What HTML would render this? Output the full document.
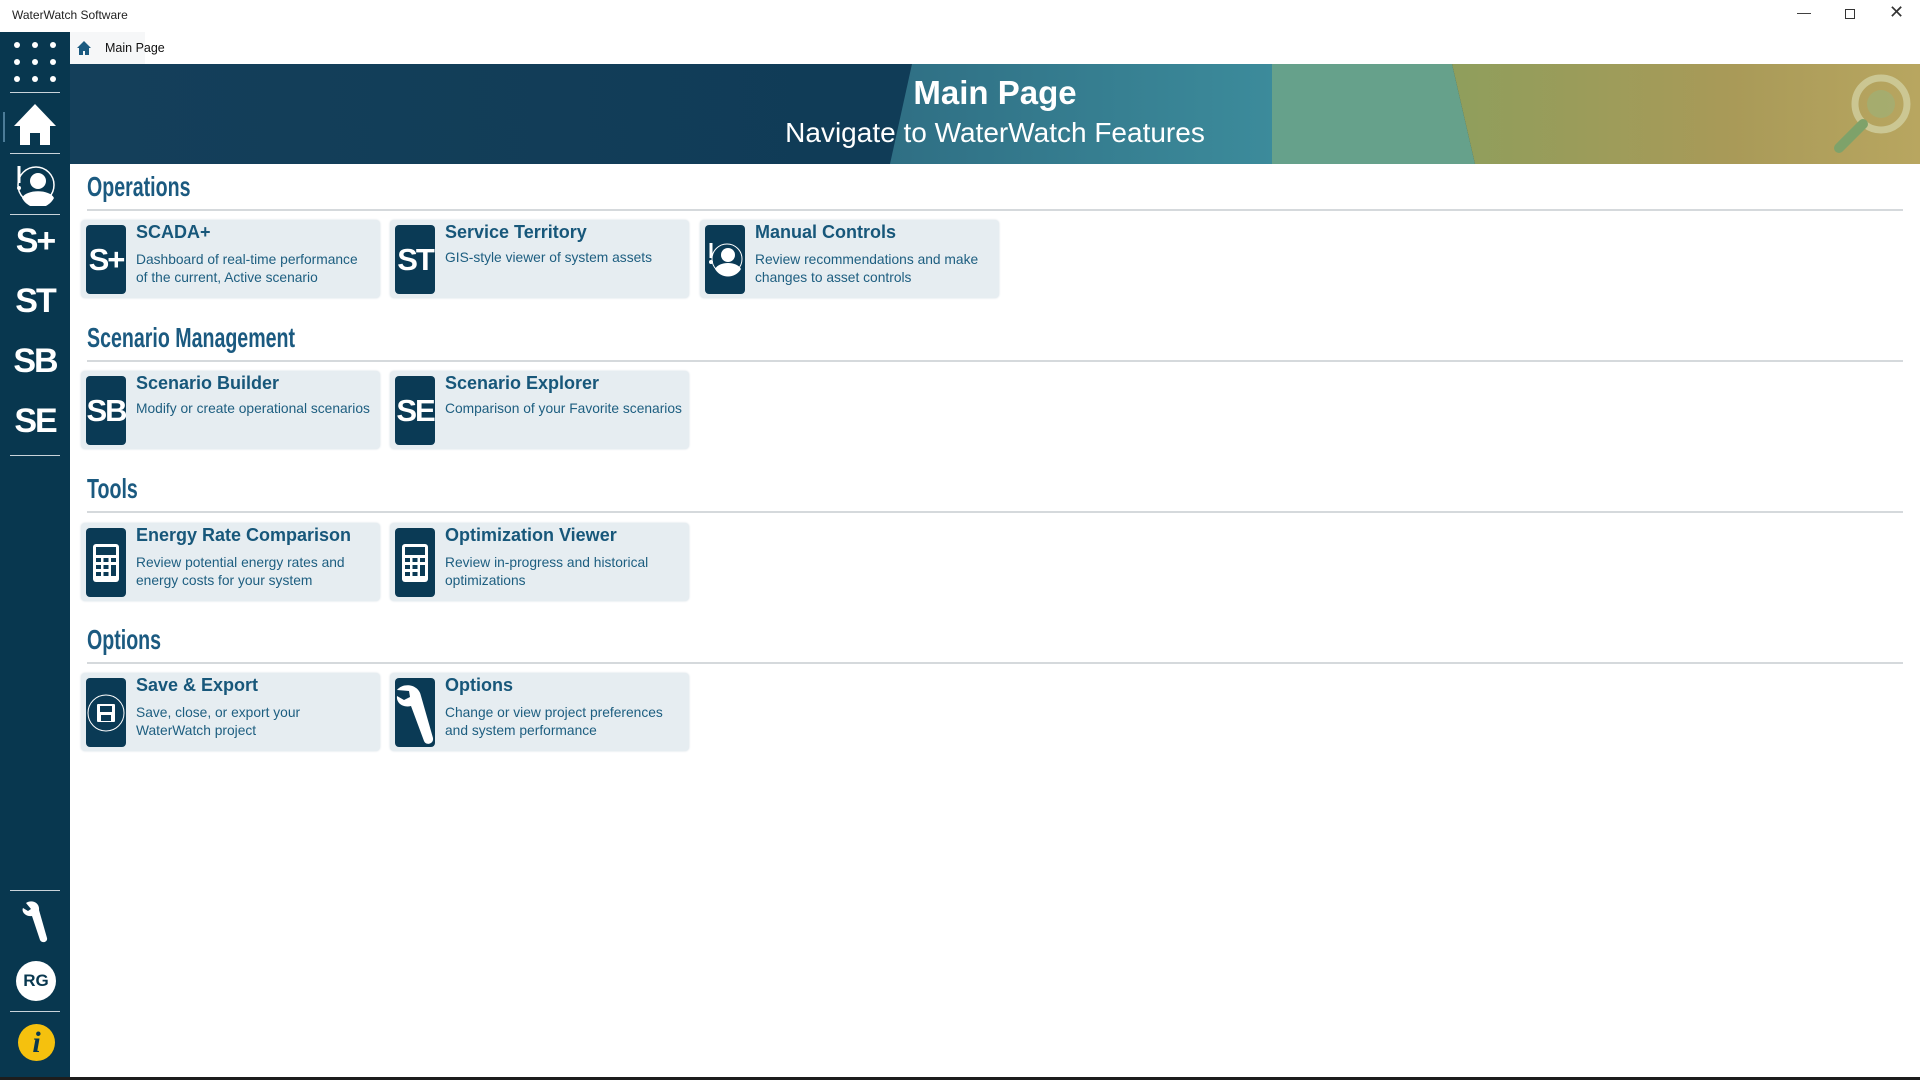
<!DOCTYPE html>
<html><head><meta charset="utf-8"><style>
*{margin:0;padding:0;box-sizing:border-box}
body{width:1920px;height:1080px;position:relative;background:#fff;font-family:"Liberation Sans",sans-serif;overflow:hidden}
.abs{position:absolute}
#side{left:0;top:32px;width:70px;height:1045px;background:#08374f}
.hr{position:absolute;left:10px;width:50px;height:1px;background:#c9d3da}
.sl{position:absolute;left:0;width:70px;text-align:center;color:#fff;font-weight:bold;font-size:34px;letter-spacing:-2px}
.card{position:absolute;width:299px;height:78px;background:#e6edf1;border-radius:4px;box-shadow:0 0 2px #d4dde3}
.ic{position:absolute;left:5px;top:5px;width:40px;height:69px;background:#0a3a55;border-radius:4px;color:#fff;font-weight:bold;font-size:31px;display:flex;align-items:center;justify-content:center;letter-spacing:-2px;overflow:hidden}
.t{position:absolute;left:55px;top:2px;font-weight:bold;font-size:18px;color:#17577a;white-space:nowrap}
.d{position:absolute;left:55px;top:31px;font-size:13.8px;line-height:18px;color:#1d5e80;white-space:nowrap}
.h{position:absolute;left:87px;font-family:"Liberation Sans Narrow","Liberation Sans",sans-serif;font-weight:bold;font-size:28px;color:#1b5a80;transform:scaleX(.7);transform-origin:left}
.ln{position:absolute;left:87px;width:1816px;height:2px;background:#d5d9dc}
</style></head><body>
<div class="abs" style="left:12px;top:8px;font-size:12px;color:#222">WaterWatch Software</div>
<div class="abs" style="left:1797px;top:4px;font-size:14px;color:#333">&#8212;</div>
<div class="abs" style="left:1845px;top:9px;width:10px;height:10px;border:1px solid #333"></div>
<div class="abs" style="left:1889px;top:2px;font-size:18px;color:#333">&#10005;</div>
<div class="abs" style="left:70px;top:32px;width:75px;height:32px;background:#f6f7f8"></div>
<svg class="abs" style="left:76px;top:40px" width="16" height="16" viewBox="0 0 16 16"><path d="M8 1L1 8h2v7h4v-4h2v4h4V8h2z" fill="#1b5a80"/></svg>
<div class="abs" style="left:105px;top:41px;font-size:12.5px;color:#111">Main Page</div>

<svg class="abs" style="left:70px;top:64px" width="1850" height="100" viewBox="0 0 1850 100">
<defs>
<linearGradient id="dk" x1="0" x2="1"><stop offset="0" stop-color="#143f5a"/><stop offset="1" stop-color="#0b3853"/></linearGradient>
<linearGradient id="tl" x1="0" x2="1"><stop offset="0" stop-color="#2f6f84"/><stop offset="1" stop-color="#3c8b9b"/></linearGradient>
<linearGradient id="ol" x1="0" x2="1"><stop offset="0" stop-color="#8f9e5c"/><stop offset=".6" stop-color="#a99a58"/><stop offset="1" stop-color="#b8a660"/></linearGradient>
</defs>
<rect width="1850" height="100" fill="url(#dk)"/>
<polygon points="842,0 1202,0 1202,100 820,100" fill="url(#tl)"/>
<polygon points="1202,0 1382,0 1405,100 1202,100" fill="#66a18b"/>
<polygon points="1382,0 1850,0 1850,100 1405,100" fill="url(#ol)"/>
</svg>
<svg class="abs" style="left:1825px;top:72px" width="90" height="84" viewBox="0 0 90 84"><circle cx="56" cy="32" r="26" fill="none" stroke="#d1cfa0" stroke-width="7" opacity=".8"/><circle cx="56" cy="32" r="14" fill="#9bb27a" opacity=".6"/><path d="M38 52L14 76" stroke="#7ea26a" stroke-width="10" stroke-linecap="round"/></svg>
<div class="abs" style="left:70px;width:1850px;top:74px;text-align:center;color:#fff;font-weight:bold;font-size:33px;font-family:'Liberation Sans Narrow','Liberation Sans',sans-serif">Main Page</div>
<div class="abs" style="left:70px;width:1850px;top:117px;text-align:center;color:#fff;font-size:28px">Navigate to WaterWatch Features</div>

<div id="side" class="abs">
<svg class="abs" style="left:13px;top:9px" width="44" height="44"><g fill="#fff"><circle cx="4" cy="4" r="3"/><circle cx="22" cy="4" r="3"/><circle cx="40" cy="4" r="3"/><circle cx="4" cy="21" r="3"/><circle cx="22" cy="21" r="3"/><circle cx="40" cy="21" r="3"/><circle cx="4" cy="38" r="3"/><circle cx="22" cy="38" r="3"/><circle cx="40" cy="38" r="3"/></g></svg>
<div class="hr" style="top:60px"></div>
<div class="abs" style="left:3px;top:80px;width:2px;height:30px;background:#4c7c98"></div>
<svg class="abs" style="left:12px;top:70px" width="46" height="44" viewBox="0 0 46 44"><path d="M23 2L2 24h6v19h10V31h10v12h10V24h6z" fill="#fff"/></svg>
<div class="hr" style="top:121px"></div>
<svg class="abs" style="left:12px;top:132px" width="46" height="42" viewBox="0 0 46 42"><circle cx="24" cy="21" r="18" fill="none" stroke="#fff" stroke-width="1.5"/><circle cx="26" cy="17" r="8" fill="#fff"/><path d="M10 34c4-9 28-9 32 0a18 18 0 0 1-32 0z" fill="#fff"/><path d="M7 2v17" stroke="#fff" stroke-width="3"/><circle cx="7" cy="24" r="2" fill="#fff"/></svg>
<div class="hr" style="top:182px"></div>
<div class="sl" style="top:190px">S+</div>
<div class="sl" style="top:250px">ST</div>
<div class="sl" style="top:310px">SB</div>
<div class="sl" style="top:370px">SE</div>
<div class="hr" style="top:423px"></div>
<div class="hr" style="top:858px"></div>
<svg class="abs" style="left:20px;top:868px" width="32" height="44" viewBox="0 0 32 44"><path d="M6 3c6-4 14 0 13 7l8 28c1 4-5 6-7 2L12 16C6 17 1 12 3 8l5 3 3-2z" fill="#fff"/></svg>
<div class="abs" style="left:16px;top:929px;width:40px;height:40px;border-radius:50%;background:#fff;color:#08374f;font-weight:bold;font-size:17px;text-align:center;line-height:40px">RG</div>
<div class="hr" style="top:979px"></div>
<div class="abs" style="left:18px;top:992px;width:37px;height:37px;border-radius:50%;background:#f5c10e;color:#08374f;font-weight:bold;font-style:italic;font-size:30px;text-align:center;line-height:38px;font-family:'Liberation Serif',serif">i</div>
</div>
<div class="abs" style="left:0;top:1077px;width:1920px;height:3px;background:#1d1d1d"></div>

<div class="h" style="top:171px">Operations</div><div class="ln" style="top:209px"></div>
<div class="h" style="top:322px">Scenario Management</div><div class="ln" style="top:360px"></div>
<div class="h" style="top:473px">Tools</div><div class="ln" style="top:511px"></div>
<div class="h" style="top:624px">Options</div><div class="ln" style="top:662px"></div>

<div class="card" style="left:81px;top:220px"><div class="ic">S+</div><div class="t">SCADA+</div><div class="d">Dashboard of real-time performance<br>of the current, Active scenario</div></div>
<div class="card" style="left:390px;top:220px"><div class="ic">ST</div><div class="t">Service Territory</div><div class="d" style="top:29px">GIS-style viewer of system assets</div></div>
<div class="card" style="left:700px;top:220px"><div class="ic"><svg width="40" height="69" viewBox="0 0 40 69"><circle cx="22" cy="34" r="15" fill="none" stroke="#fff" stroke-width="1"/><circle cx="23" cy="30" r="7" fill="#fff"/><path d="M10 44c4-8 22-8 26 0a15 15 0 0 1-26 0z" fill="#fff"/><path d="M6 18v15" stroke="#fff" stroke-width="3"/><circle cx="6" cy="37" r="2" fill="#fff"/></svg></div><div class="t">Manual Controls</div><div class="d">Review recommendations and make<br>changes to asset controls</div></div>

<div class="card" style="left:81px;top:371px"><div class="ic">SB</div><div class="t">Scenario Builder</div><div class="d" style="top:29px">Modify or create operational scenarios</div></div>
<div class="card" style="left:390px;top:371px"><div class="ic">SE</div><div class="t">Scenario Explorer</div><div class="d" style="top:29px">Comparison of your Favorite scenarios</div></div>

<div class="card" style="left:81px;top:523px"><div class="ic"><svg width="28" height="40" viewBox="0 0 28 40"><rect x="1" y="1" width="26" height="38" rx="3" fill="#fff"/><rect x="4" y="4" width="20" height="8" fill="#0a3a55"/><g fill="#0a3a55"><rect x="4" y="15" width="5" height="4"/><rect x="11.5" y="15" width="5" height="4"/><rect x="19" y="15" width="5" height="4"/><rect x="4" y="22" width="5" height="4"/><rect x="11.5" y="22" width="5" height="4"/><rect x="19" y="22" width="5" height="11"/><rect x="4" y="29" width="5" height="4"/><rect x="11.5" y="29" width="5" height="4"/></g></svg></div><div class="t">Energy Rate Comparison</div><div class="d">Review potential energy rates and<br>energy costs for your system</div></div>
<div class="card" style="left:390px;top:523px"><div class="ic"><svg width="28" height="40" viewBox="0 0 28 40"><rect x="1" y="1" width="26" height="38" rx="3" fill="#fff"/><rect x="4" y="4" width="20" height="8" fill="#0a3a55"/><g fill="#0a3a55"><rect x="4" y="15" width="5" height="4"/><rect x="11.5" y="15" width="5" height="4"/><rect x="19" y="15" width="5" height="4"/><rect x="4" y="22" width="5" height="4"/><rect x="11.5" y="22" width="5" height="4"/><rect x="19" y="22" width="5" height="11"/><rect x="4" y="29" width="5" height="4"/><rect x="11.5" y="29" width="5" height="4"/></g></svg></div><div class="t">Optimization Viewer</div><div class="d">Review in-progress and historical<br>optimizations</div></div>

<div class="card" style="left:81px;top:673px"><div class="ic"><svg width="40" height="40" viewBox="0 0 40 40"><circle cx="20" cy="20" r="18" fill="none" stroke="#fff" stroke-width="1"/><rect x="11" y="11" width="18" height="18" rx="1" fill="#fff"/><rect x="14" y="13" width="12" height="6" fill="#0a3a55"/><rect x="15" y="22" width="10" height="6" fill="#0a3a55"/></svg></div><div class="t">Save &amp; Export</div><div class="d">Save, close, or export your<br>WaterWatch project</div></div>
<div class="card" style="left:390px;top:673px"><div class="ic"><svg width="40" height="69" viewBox="0 0 40 69"><path d="M2 12c6-8 22-6 24 6l12 42c1 6-7 8-9 3L16 28C8 30 1 25 2 18l7 4 6-3-1-6z" fill="#fff"/></svg></div><div class="t">Options</div><div class="d">Change or view project preferences<br>and system performance</div></div>
</body></html>
